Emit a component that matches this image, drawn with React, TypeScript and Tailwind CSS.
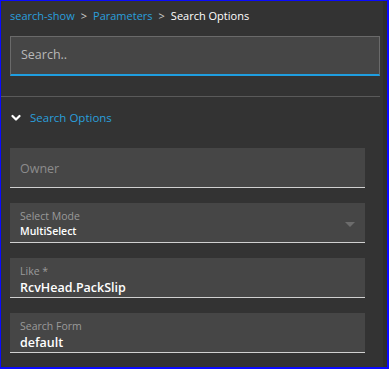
import React from 'react';

const font = { fontFamily: '"Open Sans", "Noto Sans", sans-serif' };

function Chevron() {
  return (
    <svg width="10" height="8" viewBox="0 0 10 8" className="shrink-0">
      <polyline points="1.5,2 5,5.5 8.5,2" fill="none" stroke="#ffffff" strokeWidth="2.2" strokeLinecap="round" strokeLinejoin="round" />
    </svg>
  );
}

function Field({ label, value, select, size = 'lg' }: { label: string; value: string; select?: boolean; size?: 'sm' | 'lg' }) {
  return (
    <div className="relative flex h-[40px] shrink-0 flex-col border-b border-[#d0d0d0] bg-[#464646] pl-[10px] pr-[10px]">
      <span className="mt-[6px] text-[10.5px] leading-[14px] text-[#9a9a9a]">{label}</span>
      <span className={size === 'sm' ? 'text-[10.5px] font-semibold leading-[16px] text-white' : 'mt-[1px] text-[12.5px] font-semibold leading-[17px] text-white'}>
        {value}
      </span>
      {select ? (
        <span className="absolute right-[10px] top-[19px] h-0 w-0 border-x-[5px] border-t-[5px] border-x-transparent border-t-[#6c6c6c]" />
      ) : null}
    </div>
  );
}

export default function App() {
  return (
    <div
      className="flex h-[369px] w-[389px] overflow-hidden border-b-2 border-l border-r-2 border-t border-[#0a0aff] bg-[#333333]"
      style={font}
    >
      <div className="flex flex-1 flex-col">
        <div className="flex shrink-0 items-center gap-[6px] pl-[9px] pt-[7px] text-[11px] leading-[16px]">
          <span className="text-[#2a9fdc]">search-show</span>
          <span className="text-[#cfcfcf]">&gt;</span>
          <span className="text-[#2a9fdc]">Parameters</span>
          <span className="text-[#cfcfcf]">&gt;</span>
          <span className="text-white">Search Options</span>
        </div>

        <div className="mr-[3px] ml-[9px] mt-[12px] flex h-[40px] shrink-0 items-center border border-b-2 border-[#6a6a6a] border-b-[#1f9ee0] bg-[#464646] pl-[10px]">
          <span className="text-[12.5px] text-[#b8b8b8]">Search..</span>
        </div>

        <div className="mr-[3px] mt-[20px] h-px shrink-0 bg-[#5a5a5a]" />

        <div className="flex shrink-0 items-center gap-[9px] pl-[10px] pt-[13px]">
          <Chevron />
          <span className="text-[11.5px] leading-[16px] text-[#2a9fdc]">Search Options</span>
        </div>

        <div className="ml-[9px] mr-[18px] mt-[22px] flex shrink-0 flex-col gap-[15px]">
          <div className="flex h-[40px] shrink-0 items-center border-b border-[#d0d0d0] bg-[#464646] pl-[10px]">
            <span className="pt-[4px] text-[12.5px] text-[#8c8c8c]">Owner</span>
          </div>
          <Field label="Select Mode" value="MultiSelect" select size="sm" />
          <Field label="Like *" value="RcvHead.PackSlip" />
          <Field label="Search Form" value="default" />
          <div className="h-[40px] shrink-0 bg-[#464646]" />
        </div>
      </div>
      <div className="w-[4px] shrink-0 bg-[#2d2d2d]" />
    </div>
  );
}
